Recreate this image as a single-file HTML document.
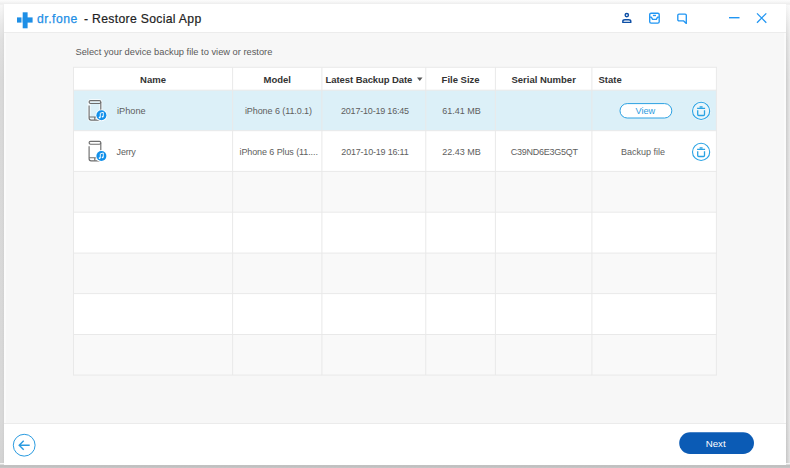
<!DOCTYPE html>
<html><head><meta charset="utf-8">
<style>
html,body{margin:0;padding:0;}
body{width:790px;height:468px;overflow:hidden;background:#d8d8d8;font-family:"Liberation Sans",sans-serif;position:relative;}
#sl{position:absolute;left:0;top:0;width:5px;height:468px;background:linear-gradient(to right,rgba(0,0,0,0) 0,rgba(0,0,0,0) 40%,rgba(0,0,0,0.035) 80%),linear-gradient(to bottom,#fbfbfb 0,#f5f5f5 8px,#e9e9e9 24px,#e0e0e0 40px,#d9d9d9 80px,#d8d8d8 420px,#d2d2d2 100%);}
#sr{position:absolute;left:785px;top:0;width:5px;height:468px;background:linear-gradient(to right,rgba(255,255,255,0) 20%,rgba(255,255,255,0.550) 100%),linear-gradient(to bottom,#fbfbfb 0,#f3f3f3 8px,#e3e3e3 24px,#d6d6d6 40px,#cdcdcd 80px,#cccccc 420px,#c4c4c4 100%);}
#st{position:absolute;left:0;top:0;width:790px;height:5px;background:linear-gradient(to bottom,#fcfcfc 0,#f6f6f6 40%,#efefef 70%,#f2f2f2 100%);}
#sb{position:absolute;left:0;top:463px;width:790px;height:5px;background:linear-gradient(to bottom,#ffffff 0,#f4f4f4 12%,#bcbcbc 54%,#c8c8c8 100%);}
#win{position:absolute;left:4px;top:4px;width:782px;height:459.600px;background:#f7f7f7;border-left:2px solid #fbfbfb;border-right:2px solid #fbfbfb;box-sizing:border-box;}
#title{position:absolute;left:4px;top:4px;width:782px;height:28px;background:#fff;border-bottom:1px solid #ececec;}
#footer{position:absolute;left:4px;top:423px;width:782px;height:40.600px;background:#fff;border-top:1px solid #ebebeb;}
.abs{position:absolute;}
.t{position:absolute;white-space:nowrap;}
.hd{position:absolute;top:68.700px;height:22px;line-height:22px;font-size:9.5px;font-weight:bold;color:#333;text-align:center;white-space:nowrap;}
.c{position:absolute;font-size:9px;color:#5e5e5e;text-align:center;height:40px;line-height:40px;white-space:nowrap;}
.r1{top:90.5px;}
.r2{top:131.9px;}
</style></head><body>
<div id="sl"></div><div id="sr"></div><div id="st"></div><div id="sb"></div>
<div id="win"></div>
<div id="title"></div>
<div id="footer"></div>

<svg class="abs" style="left:0;top:0" width="790" height="468" viewBox="0 0 790 468" fill="none">
<rect x="73.5" y="67.3" width="642.9" height="307.8" fill="#fff"/>
<rect x="73.5" y="90.2" width="642.9" height="40.5" fill="#dcf0f8"/>
<rect x="73.5" y="171.4" width="642.9" height="40.8" fill="#f9f9f9"/>
<rect x="73.5" y="253.1" width="642.9" height="40.5" fill="#f9f9f9"/>
<rect x="73.5" y="334.5" width="642.9" height="40.6" fill="#f9f9f9"/>
<g stroke="#e9e9e9" stroke-width="1">
<path d="M73.0 67.3H716.9"/>
<path d="M73.0 90.2H716.9"/>
<path d="M73.0 130.7H716.9"/>
<path d="M73.0 171.4H716.9"/>
<path d="M73.0 212.2H716.9"/>
<path d="M73.0 253.1H716.9"/>
<path d="M73.0 293.6H716.9"/>
<path d="M73.0 334.5H716.9"/>
<path d="M73.0 375.1H716.9"/>
<path d="M73.5 67.3V375.1"/>
<path d="M232.6 67.3V375.1"/>
<path d="M321.9 67.3V375.1"/>
<path d="M425.8 67.3V375.1"/>
<path d="M495.4 67.3V375.1"/>
<path d="M591.9 67.3V375.1"/>
<path d="M716.4 67.3V375.1"/>
</g>
<g fill="#1e8fe6"><rect x="17" y="17.400" width="4.500" height="5.200"/><rect x="22.700" y="12.300" width="4.900" height="16"/><rect x="22.700" y="17.400" width="9.900" height="5.200"/></g>
<path d="M417 77.500h5.500l-2.750 3.500z" fill="#555"/>
<g stroke="#0d4fa6" stroke-width="1.400">
  <circle cx="626.800" cy="15.100" r="1.650"/>
  <path d="M622.800 22.400v-1q0-1.700 2.200-1.700h3.600q2.200 0 2.200 1.700v1z" stroke-linejoin="round"/>
</g>
<g stroke="#2196f3" stroke-width="1.350" stroke-linejoin="round">
  <rect x="649.700" y="13.200" width="9.500" height="9.900" rx="1.400"/>
  <path d="M649.700 17.100h1.600l1.300 2.300h3.700l1.300-2.300h1.600"/>
  <path d="M652.900 15.500h3.100"/>
  <path d="M679 14.100h6.100a1.200 1.200 0 0 1 1.200 1.200v8.100l-2.600-2.500h-4.700a1.200 1.200 0 0 1-1.200-1.200v-4.400a1.200 1.200 0 0 1 1.200-1.200z"/>
  <path d="M729 17.700h10.500" stroke-width="1.400"/>
  <path d="M757 13.400l9.300 9.300M766.300 13.400l-9.300 9.300" stroke-width="1.300"/>
</g>
<g transform="translate(86 97.5)">
  <g stroke="#fff" stroke-width="3" opacity="0.700"><rect x="3.100" y="3.100" width="11.700" height="19.500" rx="2"/></g>
  <g stroke="#6e6e6e" stroke-width="1.150">
    <rect x="3.100" y="3.100" width="11.700" height="2.900" rx="1.400"/>
    <path d="M3.100 8v12.600a2 2 0 0 0 2 2h7.700a2 2 0 0 0 2-2v-16"/>
    <path d="M3.100 19.500h11.700M8.800 19.500v3"/>
  </g>
  <circle cx="15.400" cy="17.800" r="5.900" fill="#fff"/>
  <circle cx="15.400" cy="17.800" r="5" fill="#1290ea"/>
  <path d="M14.300 19.900v-4.300l3-0.800v4.200" stroke="#fff" stroke-width="0.900"/>
  <circle cx="13.600" cy="19.900" r="0.900" fill="#fff"/><circle cx="16.600" cy="19.100" r="0.900" fill="#fff"/>
</g>
<g transform="translate(86 138.2)">
  <g stroke="#fff" stroke-width="3" opacity="0.700"><rect x="3.100" y="3.100" width="11.700" height="19.500" rx="2"/></g>
  <g stroke="#6e6e6e" stroke-width="1.150">
    <rect x="3.100" y="3.100" width="11.700" height="2.900" rx="1.400"/>
    <path d="M3.100 8v12.600a2 2 0 0 0 2 2h7.700a2 2 0 0 0 2-2v-16"/>
    <path d="M3.100 19.500h11.700M8.800 19.500v3"/>
  </g>
  <circle cx="15.400" cy="17.800" r="5.900" fill="#fff"/>
  <circle cx="15.400" cy="17.800" r="5" fill="#1290ea"/>
  <path d="M14.300 19.900v-4.300l3-0.800v4.200" stroke="#fff" stroke-width="0.900"/>
  <circle cx="13.600" cy="19.900" r="0.900" fill="#fff"/><circle cx="16.600" cy="19.100" r="0.900" fill="#fff"/>
</g>
<g transform="translate(690.1 99.9)">
  <circle cx="11" cy="11" r="9.700" fill="#fff" opacity="0.600"/>
  <circle cx="11" cy="11" r="8.600" fill="#eaf6fb" stroke="#2aa3e4" stroke-width="1.100"/>
  <path d="M7.600 10.300v4.300a1 1 0 0 0 1 1h4.800a1 1 0 0 0 1-1v-4.300" stroke="#2aa3e4" stroke-width="1.300"/>
  <path d="M7 8.400h8M9.500 6.900h3" stroke="#2aa3e4" stroke-width="1.200"/>
</g>
<g transform="translate(690.1 140.9)">
  <circle cx="11" cy="11" r="9.700" fill="#fff" opacity="0.600"/>
  <circle cx="11" cy="11" r="8.600" fill="#fff" stroke="#2aa3e4" stroke-width="1.100"/>
  <path d="M7.600 10.300v4.300a1 1 0 0 0 1 1h4.800a1 1 0 0 0 1-1v-4.300" stroke="#2aa3e4" stroke-width="1.300"/>
  <path d="M7 8.400h8M9.500 6.900h3" stroke="#2aa3e4" stroke-width="1.200"/>
</g>
<rect x="679.200" y="432.300" width="74.800" height="21.600" rx="10.800" fill="#0b5bb5"/>
<rect x="620" y="103.600" width="51.800" height="14.400" rx="7.200" fill="#fff" stroke="#2aa0e2" stroke-width="1"/>
<circle cx="24.200" cy="445.200" r="10.900" fill="#fff" stroke="#2a9be0" stroke-width="1"/>
<path d="M29.700 445.200H19.500M23.700 440.700l-4.500 4.500 4.500 4.500" stroke="#2a9be0" stroke-width="1.400"/>
</svg>
<div class="t" style="left:37px;top:12px;font-size:12.200px;letter-spacing:0.500px;-webkit-text-stroke:0.250px #1e8fe6;color:#1e8fe6;">dr.fone</div>
<div class="t" style="left:84px;top:12px;font-size:12.200px;letter-spacing:0.320px;-webkit-text-stroke:0.200px #222;color:#222;">- Restore Social App</div>
<div class="t" style="left:75.500px;top:46.700px;font-size:9.300px;color:#5a5a5a;">Select your device backup file to view or restore</div>
<div class="hd" style="left:73.5px;width:159.1px;">Name</div>
<div class="hd" style="left:232.6px;width:89.3px;">Model</div>
<div class="hd" style="left:325.600px;text-align:left;letter-spacing:-0.080px;">Latest Backup Date</div>
<div class="hd" style="left:425.8px;width:69.6px;">File Size</div>
<div class="hd" style="left:495.4px;width:96.5px;">Serial Number</div>
<div class="hd" style="left:598.500px;text-align:left;">State</div>
<div class="c r1" style="left:117px;font-size:9.200px;">iPhone</div>
<div class="c r1" style="left:233.8px;width:89.3px;letter-spacing:-0.08px;">iPhone 6 (11.0.1)</div>
<div class="c r1" style="left:323.0px;width:103.9px;letter-spacing:-0.2px;">2017-10-19 16:45</div>
<div class="c r1" style="left:426.8px;width:69.6px;letter-spacing:0px;">61.41 MB</div>
<div class="abs" style="left:618.800px;top:103px;width:53px;height:15.500px;font-size:9.200px;line-height:17.800px;text-align:center;color:#2a9be0;">View</div>
<div class="c r2" style="left:116.600px;letter-spacing:-0.200px;">Jerry</div>
<div class="c r2" style="left:234.0px;width:89.3px;letter-spacing:-0.1px;">iPhone 6 Plus (11....</div>
<div class="c r2" style="left:323.0px;width:103.9px;letter-spacing:-0.2px;">2017-10-19 16:11</div>
<div class="c r2" style="left:426.8px;width:69.6px;letter-spacing:0px;">22.43 MB</div>
<div class="c r2" style="left:496.0px;width:96.5px;letter-spacing:-0.25px;">C39ND6E3G5QT</div>
<div class="c r2" style="left:593px;width:100px;">Backup file</div>
<div class="abs" style="left:678.200px;top:432px;width:75px;height:22px;color:#fff;font-size:9.700px;line-height:24px;text-align:center;">Next</div>
</body></html>
